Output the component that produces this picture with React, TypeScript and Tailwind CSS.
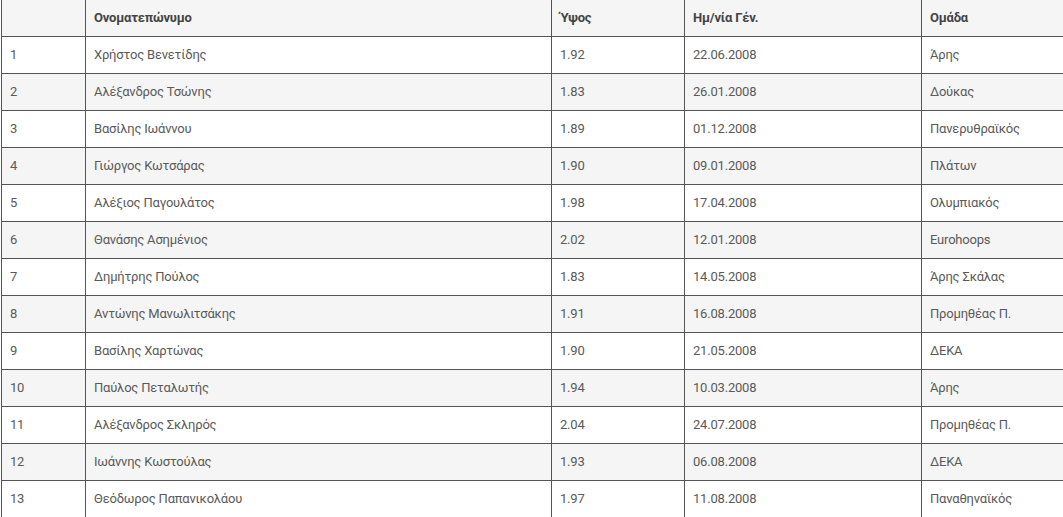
const players = [
  { name: "Χρήστος Βενετίδης", height: "1.92", born: "22.06.2008", team: "Άρης" },
  { name: "Αλέξανδρος Τσώνης", height: "1.83", born: "26.01.2008", team: "Δούκας" },
  { name: "Βασίλης Ιωάννου", height: "1.89", born: "01.12.2008", team: "Πανερυθραϊκός" },
  { name: "Γιώργος Κωτσάρας", height: "1.90", born: "09.01.2008", team: "Πλάτων" },
  { name: "Αλέξιος Παγουλάτος", height: "1.98", born: "17.04.2008", team: "Ολυμπιακός" },
  { name: "Θανάσης Ασημένιος", height: "2.02", born: "12.01.2008", team: "Eurohoops" },
  { name: "Δημήτρης Πούλος", height: "1.83", born: "14.05.2008", team: "Άρης Σκάλας" },
  { name: "Αντώνης Μανωλιτσάκης", height: "1.91", born: "16.08.2008", team: "Προμηθέας Π." },
  { name: "Βασίλης Χαρτώνας", height: "1.90", born: "21.05.2008", team: "ΔΕΚΑ" },
  { name: "Παύλος Πεταλωτής", height: "1.94", born: "10.03.2008", team: "Άρης" },
  { name: "Αλέξανδρος Σκληρός", height: "2.04", born: "24.07.2008", team: "Προμηθέας Π." },
  { name: "Ιωάννης Κωστούλας", height: "1.93", born: "06.08.2008", team: "ΔΕΚΑ" },
  { name: "Θεόδωρος Παπανικολάου", height: "1.97", born: "11.08.2008", team: "Παναθηναϊκός" },
];

const App = () => {
  return (
    <div className="w-screen h-screen overflow-hidden bg-white">
      <table
        className="ml-px w-[1100px] border-collapse table-fixed text-[13px] leading-5 tracking-[-0.2px] text-[#5a5a5a]"
        style={{ fontFamily: "Roboto, 'Noto Sans', sans-serif" }}
      >
        <colgroup>
          <col className="w-[84px]" />
          <col className="w-[466px]" />
          <col className="w-[133px]" />
          <col className="w-[237px]" />
          <col />
        </colgroup>
        <thead>
          <tr className="bg-[#f5f5f5] text-[#444] font-bold">
            <th className="border border-t-0 border-[#555] px-2 py-2 text-left h-9"></th>
            <th className="border border-t-0 border-[#555] px-2 py-2 text-left h-9">Ονοματεπώνυμο</th>
            <th className="border border-t-0 border-[#555] px-2 py-2 text-left h-9">Ύψος</th>
            <th className="border border-t-0 border-[#555] px-2 py-2 text-left h-9">Ημ/νία Γέν.</th>
            <th className="border border-t-0 border-[#555] px-2 py-2 text-left h-9">Ομάδα</th>
          </tr>
        </thead>
        <tbody>
          {players.map((p, i) => (
            <tr key={i} className="even:bg-[#f5f5f5]">
              <td className="border border-[#555] px-2 py-2 h-[37px]">{i + 1}</td>
              <td className="border border-[#555] px-2 py-2">{p.name}</td>
              <td className="border border-[#555] px-2 py-2">{p.height}</td>
              <td className="border border-[#555] px-2 py-2">{p.born}</td>
              <td className="border border-[#555] px-2 py-2">{p.team}</td>
            </tr>
          ))}
        </tbody>
      </table>
    </div>
  );
};

export default App;
